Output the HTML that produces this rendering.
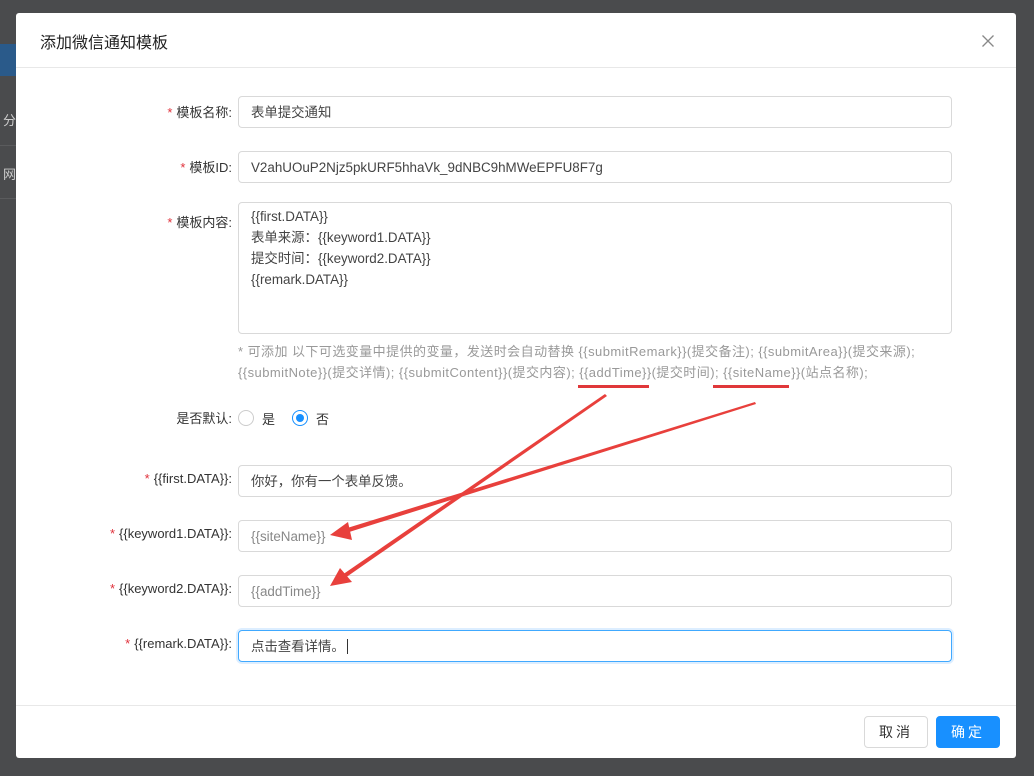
<!DOCTYPE html>
<html><head><meta charset="utf-8"><style>
*{box-sizing:border-box;margin:0;padding:0}
body{width:1034px;height:776px;background:#4a4b4d;position:relative;overflow:hidden;font-family:"Liberation Sans","Microsoft YaHei","Noto Sans CJK SC",sans-serif;font-size:13px;color:#333}
.bgl{position:absolute;left:0;width:16px}
.modal{position:absolute;left:16px;top:13px;width:1000px;height:745px;background:#fff;border-radius:3px}
.title{position:absolute;left:24px;top:16px;font-size:16px;color:#222}
.lbl{position:absolute;right:784px;text-align:right;white-space:nowrap;color:#333}
.lbl i{color:#e0303a;font-style:normal;margin-right:4px}
.hr{position:absolute;left:0;right:0;height:1px;background:#e8e8e8}
.inp{position:absolute;left:222px;width:714px;height:32px;border:1px solid #d9d9d9;border-radius:4px;padding:0 12px;line-height:31px;color:#444;white-space:nowrap;font-size:13.4px}
.ph{color:#888}
.help{position:absolute;left:222px;top:328px;width:740px;line-height:21px;color:#999;font-size:13px;letter-spacing:.45px;white-space:nowrap}
.btn{position:absolute;top:703px;height:32px;width:64px;border-radius:4px;text-align:center;line-height:30px;font-size:14px;letter-spacing:3px}
</style></head><body>
<div class="bgl" style="top:44px;height:32px;background:#2a5a8a"></div>
<div style="position:absolute;left:3px;top:110px;color:#ccc;font-size:13px">分</div>
<div style="position:absolute;left:3px;top:164px;color:#ccc;font-size:13px">网</div>
<div class="bgl" style="top:145px;height:1px;background:#5a5b5d"></div>
<div class="bgl" style="top:198px;height:1px;background:#5a5b5d"></div>
<div class="modal">
<div class="title">添加微信通知模板</div>
<svg style="position:absolute;left:966px;top:22px" width="12" height="12"><path d="M0.5 0.5L11.5 11.5M11.5 0.5L0.5 11.5" stroke="#888" stroke-width="1.3"/></svg>
<div class="hr" style="top:54px"></div>
<div class="lbl" style="top:89px"><i>*</i>模板名称:</div>
<div class="inp" style="top:83px">表单提交通知</div>
<div class="lbl" style="top:144px"><i>*</i>模板ID:</div>
<div class="inp" style="top:138px">V2ahUOuP2Njz5pkURF5hhaVk_9dNBC9hMWeEPFU8F7g</div>
<div class="lbl" style="top:199px"><i>*</i>模板内容:</div>
<div class="inp" style="top:189px;height:132px;line-height:21px;padding-top:3px">{{first.DATA}}<br>表单来源：{{keyword1.DATA}}<br>提交时间：{{keyword2.DATA}}<br>{{remark.DATA}}</div>
<div class="help">* 可添加 以下可选变量中提供的变量，发送时会自动替换 {{submitRemark}}(提交备注); {{submitArea}}(提交来源);<br>{{submitNote}}(提交详情); {{submitContent}}(提交内容); {{addTime}}(提交时间); {{siteName}}(站点名称);</div>
<div class="lbl" style="top:395px">是否默认:</div>
<div style="position:absolute;left:222px;top:397px;width:16px;height:16px;border:1px solid #ccc;border-radius:50%"></div>
<div style="position:absolute;left:246px;top:396px">是</div>
<div style="position:absolute;left:276px;top:397px;width:16px;height:16px;border:1px solid #1890ff;border-radius:50%"><div style="margin:3px;width:8px;height:8px;background:#1890ff;border-radius:50%"></div></div>
<div style="position:absolute;left:300px;top:396px">否</div>
<div class="lbl" style="top:458px"><i>*</i>{{first.DATA}}:</div>
<div class="inp" style="top:452px">你好，你有一个表单反馈。</div>
<div class="lbl" style="top:513px"><i>*</i>{{keyword1.DATA}}:</div>
<div class="inp" style="top:507px"><span class="ph">{{siteName}}</span></div>
<div class="lbl" style="top:568px"><i>*</i>{{keyword2.DATA}}:</div>
<div class="inp" style="top:562px"><span class="ph">{{addTime}}</span></div>
<div class="lbl" style="top:623px"><i>*</i>{{remark.DATA}}:</div>
<div class="inp" style="top:617px;border-color:#40a9ff;box-shadow:0 0 0 2px rgba(24,144,255,.15)">点击查看详情。<span style="border-left:1px solid #333;margin-left:2px"></span></div>
<div class="hr" style="top:692px"></div>
<div class="btn" style="left:848px;border:1px solid #d9d9d9;color:#333">取消</div>
<div class="btn" style="left:920px;background:#1890ff;color:#fff;border:1px solid #1890ff">确定</div>
</div>
<svg width="1034" height="776" style="position:absolute;left:0;top:0">
<rect x="578" y="385" width="71" height="3" fill="#e0383a"/>
<rect x="713" y="385" width="76" height="3" fill="#e0383a"/>
<polygon points="755,402 756,404 346,533 344,529" fill="#e8403c"/>
<polygon points="330,535 348,522 352,540" fill="#e8403c"/>
<polygon points="605,394 607,396 345,578 342,575" fill="#e8403c"/>
<polygon points="330,586 340,568 352,582" fill="#e8403c"/>
</svg>
</body></html>
